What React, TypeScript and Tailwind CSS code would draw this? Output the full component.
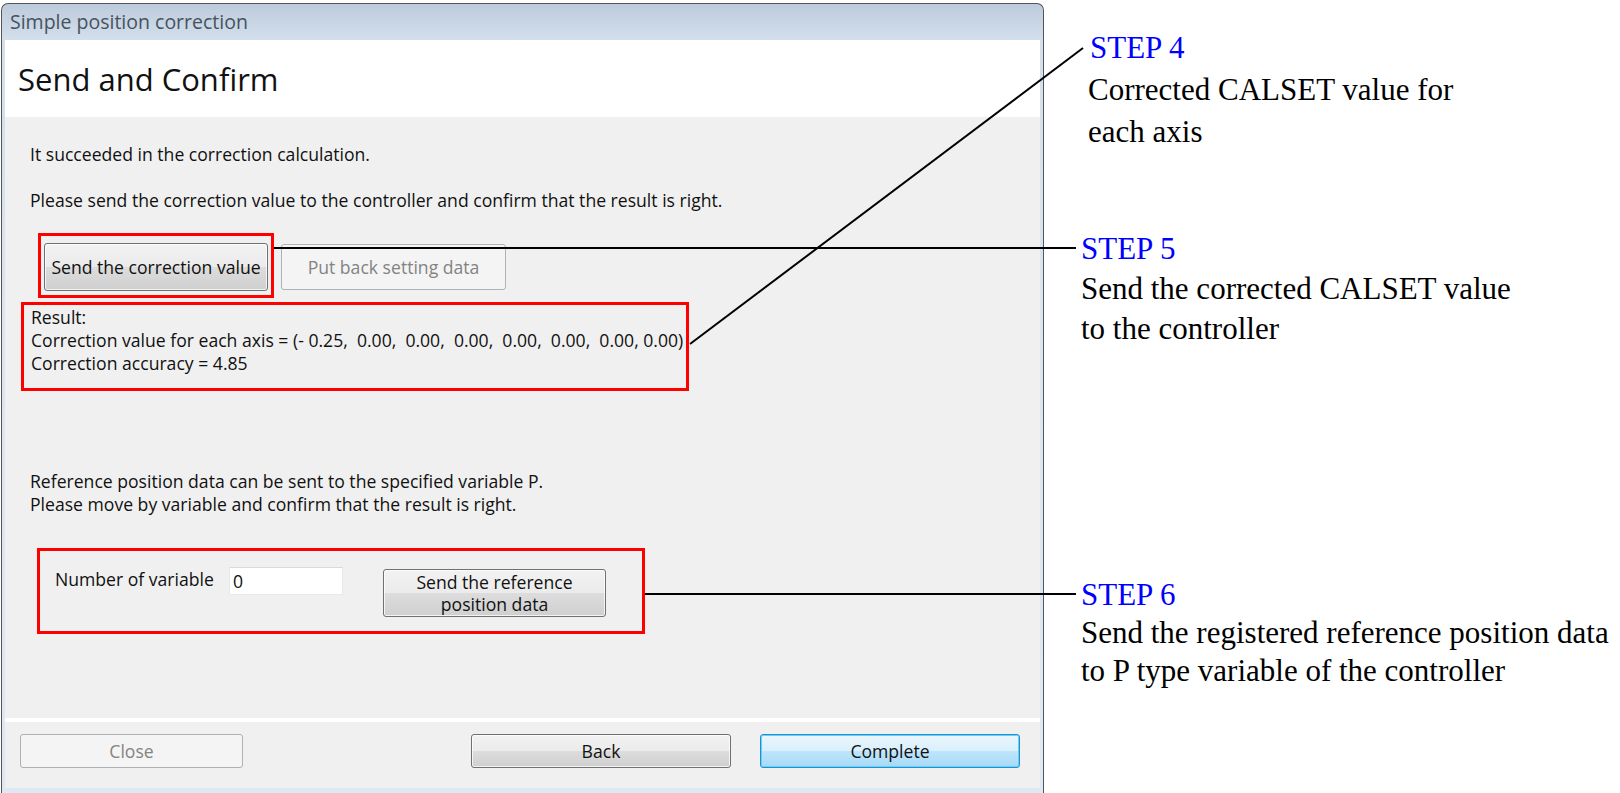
import React from "react";

const btnNormal =
  "rounded-[3px] border border-[#707070] bg-[linear-gradient(to_bottom,#f2f2f2_0%,#ebebeb_49%,#dddddd_50%,#cfcfcf_100%)] shadow-[inset_0_0_0_1px_rgba(255,255,255,0.75)] text-[#111]";
const btnDisabled =
  "rounded-[3px] border border-[#adb2b5] bg-[#f4f4f4] text-[#838383]";
const btnDefault =
  "rounded-[3px] border border-[#2a8ccf] bg-[linear-gradient(to_bottom,#eaf6fd_0%,#d9f0fc_49%,#bee6fd_50%,#a7d9f5_100%)] shadow-[inset_0_0_0_1px_#5fd5fb] text-[#111]";

function Window() {
  return (
    <div className="flex h-[790px] w-[1043px] flex-col rounded-t-[7px] border border-b-0 border-[#555] bg-[linear-gradient(to_bottom,#bccbdb_0px,#d3dfec_36px,#dae5f1_300px,#dfe9f5_100%)]">
      {/* title bar */}
      <div className="flex h-[36px] shrink-0 items-center pl-[8px] text-[19.5px] text-[#47525f]">
        Simple position correction
      </div>

      <div className="mx-[3px] flex flex-col">
        {/* header */}
        <div className="flex h-[77px] items-center bg-white pl-[13px] pt-[2px] text-[31px] text-[#111]">
          Send and Confirm
        </div>

        {/* main */}
        <div className="flex h-[601px] flex-col items-start bg-[#f0f0f0] text-[17.6px] leading-[23px] text-[#111]">
          <p className="ml-[25px] mt-[26px]">It succeeded in the correction calculation.</p>
          <p className="ml-[25px] mt-[23px]">
            Please send the correction value to the controller and confirm that the result is right.
          </p>

          <div className="ml-[33px] mt-[21px] flex items-start">
            <div className="border-[3px] border-[#ff0000] px-[3px] pb-[4px] pt-[7px]">
              <button className={`${btnNormal} h-[48px] w-[224px]`}>Send the correction value</button>
            </div>
            <button className={`${btnDisabled} ml-[7px] mt-[11px] h-[46px] w-[225px]`}>
              Put back setting data
            </button>
          </div>

          <div className="ml-[16px] mt-[4px] w-[668px] border-[3px] border-[#ff0000] pb-[13px] pl-[7px] pt-[1px]">
            <div>Result:</div>
            <div className="whitespace-pre">
              {"Correction value for each axis = (- 0.25,  0.00,  0.00,  0.00,  0.00,  0.00,  0.00, 0.00)"}
            </div>
            <div>Correction accuracy = 4.85</div>
          </div>

          <div className="ml-[25px] mt-[79px]">
            <div>Reference position data can be sent to the specified variable P.</div>
            <div>Please move by variable and confirm that the result is right.</div>
          </div>

          <div className="ml-[32px] mt-[32px] flex h-[86px] w-[608px] items-start border-[3px] border-[#ff0000] pl-[15px]">
            <span className="mt-[17px] w-[174px]">Number of variable</span>
            <div className="mt-[16px] flex h-[28px] w-[114px] items-center border border-[#e3e9ef] border-t-[#d5dbe1] bg-white pl-[3px]">
              0
            </div>
            <button className={`${btnNormal} ml-[40px] mt-[18px] h-[48px] w-[223px] leading-[22px]`}>
              Send the reference
              <br />
              position data
            </button>
          </div>
        </div>

        {/* separator */}
        <div className="h-[4px] bg-white" />

        {/* footer */}
        <div className="flex h-[66px] items-start bg-[#f0f0f0] pl-[15px] pr-[20px] pt-[12px] text-[17.6px]">
          <button className={`${btnDisabled} h-[34px] w-[223px]`}>Close</button>
          <div className="flex-1" />
          <button className={`${btnNormal} h-[34px] w-[260px]`}>Back</button>
          <button className={`${btnDefault} ml-[29px] h-[34px] w-[260px]`}>Complete</button>
        </div>
      </div>
    </div>
  );
}

function Annotations() {
  return (
    <div className="flex flex-col font-['Liberation_Serif',serif] text-[31px] text-black">
      <div className="ml-[44px] mt-[27px] leading-[42px]">
        <div className="pl-[2px] text-[#0000ff]">STEP 4</div>
        <div>Corrected CALSET value for</div>
        <div>each axis</div>
      </div>
      <div className="ml-[37px] mt-[76px] leading-[40px]">
        <div className="text-[#0000ff]">STEP 5</div>
        <div>Send the corrected CALSET value</div>
        <div>to the controller</div>
      </div>
      <div className="ml-[37px] mt-[227px] leading-[38px]">
        <div className="text-[#0000ff]">STEP 6</div>
        <div className="whitespace-nowrap">Send the registered reference position data</div>
        <div>to P type variable of the controller</div>
      </div>
    </div>
  );
}

// leader lines from the red boxes to the STEP notes
function Connectors() {
  return (
    <svg
      className="pointer-events-none absolute left-0 top-0"
      width={1620}
      height={793}
      viewBox="0 0 1620 793"
    >
      <g stroke="#000" strokeWidth={2} fill="none">
        <line x1={690} y1={344} x2={1083} y2={48} />
        <line x1={274} y1={248} x2={1076} y2={248} />
        <line x1={645} y1={594} x2={1076} y2={594} />
      </g>
    </svg>
  );
}

export default function App() {
  return (
    <div className="relative flex h-[793px] w-[1620px] overflow-hidden bg-white font-['Open_Sans',sans-serif]">
      <div className="shrink-0 pl-[1px] pt-[3px]">
        <Window />
      </div>
      <Annotations />
      <Connectors />
    </div>
  );
}
